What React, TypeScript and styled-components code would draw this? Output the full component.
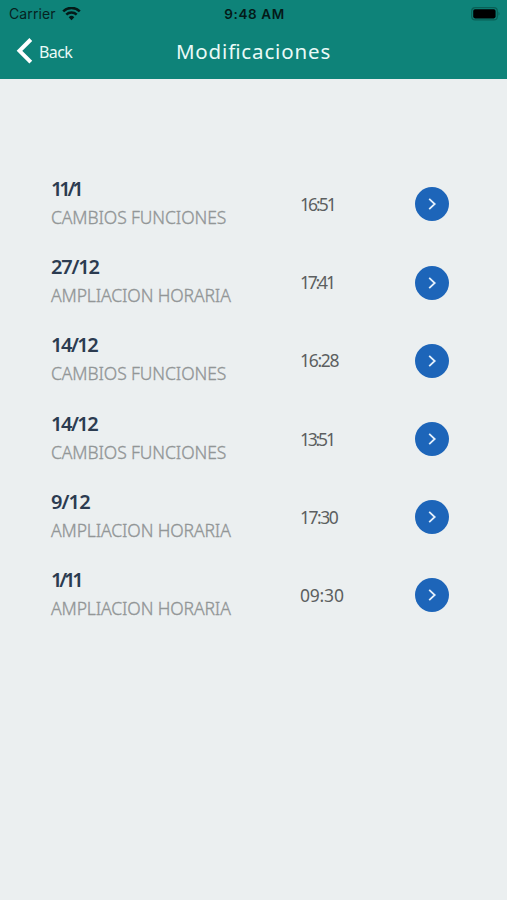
import React from "react";
import styled, { createGlobalStyle } from "styled-components";

const GlobalStyle = createGlobalStyle`
  * { box-sizing: border-box; }
  body { margin: 0; background: #ebeff0; font-family: "Noto Sans", "Open Sans", sans-serif; }
`;

const Screen = styled.div`
  min-height: 900px;
  background: #ebeff0;
`;

const Header = styled.header`
  height: 79px;
  background: #0e8379;
`;

const StatusBar = styled.div`
  height: 27px;
  display: grid;
  grid-template-columns: 1fr auto 1fr;
  align-items: center;
  padding: 0 6px 0 9px;
  font-family: Inter, sans-serif;
  font-size: 14px;
  color: #06221f;
`;

const Carrier = styled.div`
  display: flex;
  align-items: center;
  gap: 6px;
  letter-spacing: 0.1px;
`;

const Clock = styled.div`
  font-weight: 600;
  color: #041a18;
  letter-spacing: 0.6px;
  font-size: 13.5px;
  margin-right: 1px;
`;

const BatterySlot = styled.div`
  display: flex;
  justify-content: flex-end;
`;

const NavBar = styled.div`
  height: 52px;
  display: grid;
  grid-template-columns: 1fr auto 1fr;
  padding: 0 16px;
`;

const Back = styled.button`
  display: flex;
  align-items: center;
  gap: 6px;
  height: 48px;
  padding: 0;
  border: 0;
  background: none;
  color: #e9faf7;
  font: 400 16px/20px "Noto Sans", sans-serif;
  letter-spacing: -0.6px;
  svg { display: block; }
`;

const BackLabel = styled.span`
  padding-top: 2px;
`;

const Title = styled.h1`
  margin: 0;
  color: #e9faf7;
  font-weight: 400;
  font-size: 20.5px;
  line-height: 49px;
  letter-spacing: 0.85px;
  font-feature-settings: "liga" 1;
`;

const List = styled.ul`
  list-style: none;
  margin: 0;
  padding: 86.4px 58px 0 51px;
`;

const Row = styled.li`
  height: 78.2px;
  display: grid;
  grid-template-columns: 249px 1fr 34px;
  align-items: center;
`;

const Entry = styled.div`
  padding-bottom: 3px;
`;

const DateText = styled.div<{ $spacing: number }>`
  color: #2b3b50;
  font-weight: 600;
  font-size: 20px;
  line-height: 28px;
  letter-spacing: ${(p) => p.$spacing}px;
`;

const Kind = styled.div<{ $spacing: number }>`
  color: #929697;
  font-weight: 300;
  font-size: 17.5px;
  line-height: 28px;
  white-space: nowrap;
  letter-spacing: ${(p) => p.$spacing}px;
  -webkit-text-stroke: 0.35px #929697;
`;

const Time = styled.div<{ $spacing: number }>`
  color: #5c5f60;
  font-size: 17.5px;
  line-height: 24px;
  padding-bottom: 1px;
  letter-spacing: ${(p) => p.$spacing}px;
`;

const OpenButton = styled.button`
  width: 34px;
  height: 34px;
  padding: 0;
  border: 0;
  border-radius: 50%;
  background: #1d65b9;
  display: grid;
  place-items: center;
`;

const items = [
  { date: "11/1", dateSpacing: -3.2, kind: "CAMBIOS FUNCIONES", time: "16:51", timeSpacing: -2 },
  { date: "27/12", dateSpacing: -1.2, kind: "AMPLIACION HORARIA", time: "17:41", timeSpacing: -2.2 },
  { date: "14/12", dateSpacing: -1.5, kind: "CAMBIOS FUNCIONES", time: "16:28", timeSpacing: -1.3 },
  { date: "14/12", dateSpacing: -1.5, kind: "CAMBIOS FUNCIONES", time: "13:51", timeSpacing: -2.2 },
  { date: "9/12", dateSpacing: -0.9, kind: "AMPLIACION HORARIA", time: "17:30", timeSpacing: -1.5 },
  { date: "1/11", dateSpacing: -3.2, kind: "AMPLIACION HORARIA", time: "09:30", timeSpacing: -0.2 },
];

const kindSpacing: Record<string, number> = {
  "CAMBIOS FUNCIONES": -0.1,
  "AMPLIACION HORARIA": -0.12,
};

const WifiIcon = () => (
  <svg width="19" height="14" viewBox="0 0 19 14" fill="none" stroke="#041a18" strokeWidth="2.5">
    <path d="M1.2 4.3a11.9 11.9 0 0 1 16.6 0" />
    <path d="M4.3 7.7a7.4 7.4 0 0 1 10.4 0" />
    <path d="M6.7 10.2a4 4 0 0 1 5.6 0L9.5 13.2Z" fill="#041a18" stroke="none" />
  </svg>
);

const BatteryIcon = () => (
  <svg width="30" height="14" viewBox="0 0 30 14">
    <rect x="0.7" y="0.7" width="25.6" height="12.2" rx="3.5" fill="none" stroke="#096056" strokeWidth="1.2" />
    <rect x="2.2" y="2.2" width="22.4" height="9.2" rx="1.8" fill="#000" />
    <path d="M27.5 4.8q2 2 0 4z" fill="#096056" />
  </svg>
);

export default function App() {
  return (
    <Screen>
      <GlobalStyle />
      <Header>
        <StatusBar>
          <Carrier>Carrier <WifiIcon /></Carrier>
          <Clock>9:48 AM</Clock>
          <BatterySlot><BatteryIcon /></BatterySlot>
        </StatusBar>
        <NavBar>
          <Back>
            <svg width="17" height="28" viewBox="0 0 17 28" fill="none" stroke="#fff" strokeWidth="4">
              <path d="M14.8 2.5 3.5 13.8 14.8 25.1" />
            </svg>
            <BackLabel>Back</BackLabel>
          </Back>
          <Title>Modificaciones</Title>
        </NavBar>
      </Header>
      <List>
        {items.map((item, i) => (
          <Row key={i}>
            <Entry>
              <DateText $spacing={item.dateSpacing}>{item.date}</DateText>
              <Kind $spacing={kindSpacing[item.kind]}>{item.kind}</Kind>
            </Entry>
            <Time $spacing={item.timeSpacing}>{item.time}</Time>
            <OpenButton aria-label="Abrir">
              <svg width="12" height="14" viewBox="0 0 12 14" fill="none" stroke="#e4f0fc" strokeWidth="1.8">
                <path d="M3.2 1.8 8.7 7 3.2 12.2" />
              </svg>
            </OpenButton>
          </Row>
        ))}
      </List>
    </Screen>
  );
}
